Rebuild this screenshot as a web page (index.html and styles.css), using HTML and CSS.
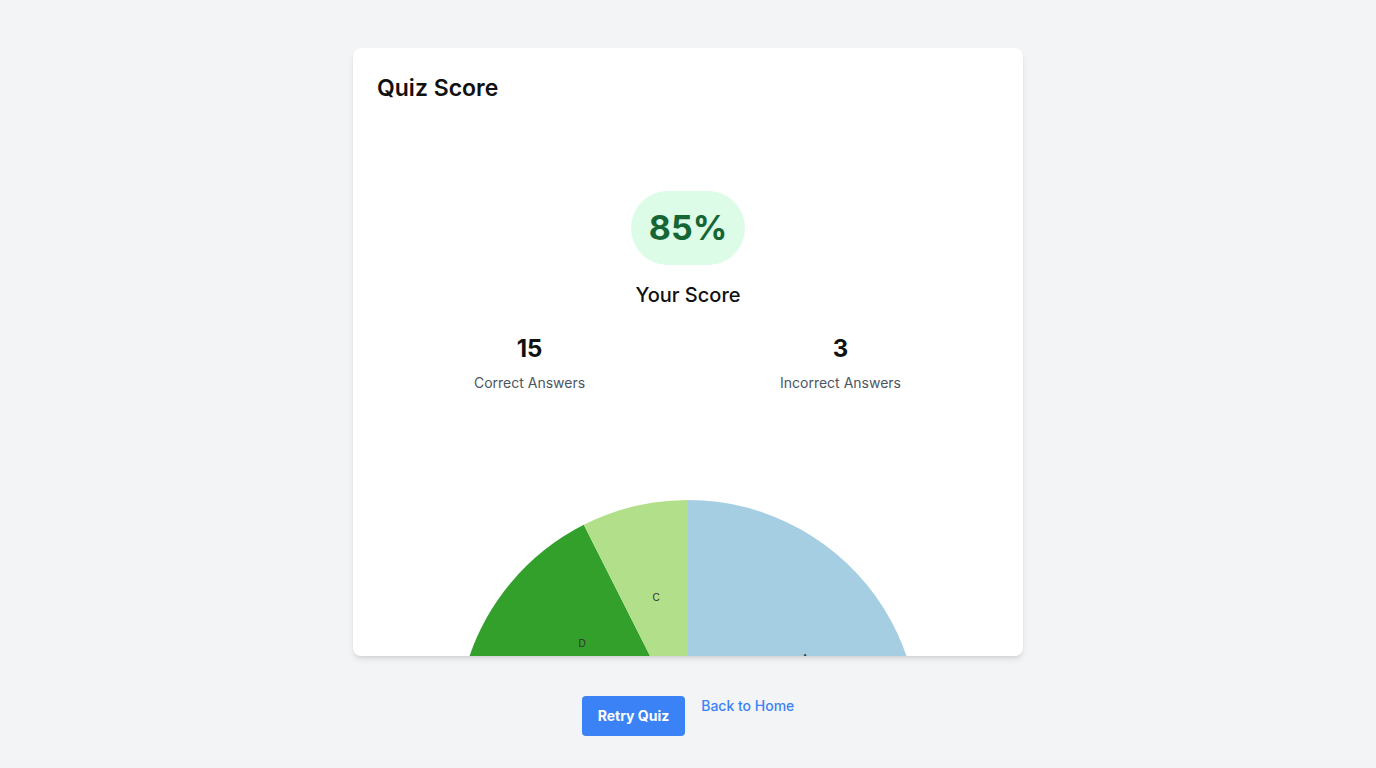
FILE: index.html
```html
<!DOCTYPE html>
<html lang="en">
<head>
<meta charset="utf-8">
<title>Quiz Score</title>
<link rel="stylesheet" href="styles.css">
</head>
<body>
<main class="page">
  <section class="card">
    <h1 class="card-title">Quiz Score</h1>
    <div class="score">
      <div class="score-badge">85%</div>
      <div class="score-label">Your Score</div>
    </div>
    <div class="stats">
      <div class="stat">
        <div class="stat-value">15</div>
        <div class="stat-label">Correct Answers</div>
      </div>
      <div class="stat">
        <div class="stat-value">3</div>
        <div class="stat-label">Incorrect Answers</div>
      </div>
    </div>
    <div class="chart">
      <svg class="pie" width="622" height="622" viewBox="0 0 622 622">
        <path d="M311 311 L311 80 A231 231 0 0 1 518.6 412.3 Z" fill="#a6cee3"/>
        <path d="M311 311 L518.6 412.3 A231 231 0 0 1 89.2 246.6 Z" fill="#1f78b4"/>
        <path d="M311 311 L89.2 246.6 A231 231 0 0 1 206.8 104.8 Z" fill="#33a02c"/>
        <path d="M311 311 L206.8 104.8 A231 231 0 0 1 311 80 Z" fill="#b2df8a"/>
        <text class="pie-label" x="428" y="238" dy="0.35em">A</text>
        <text class="pie-label" x="205" y="223" dy="0.35em">D</text>
        <text class="pie-label" x="279" y="177" dy="0.35em">C</text>
      </svg>
    </div>
  </section>
  <div class="actions">
    <button class="btn-primary" type="button">Retry Quiz</button>
    <a class="link" href="#">Back to Home</a>
  </div>
</main>
</body>
</html>
```

FILE: styles.css
```css
* { box-sizing: border-box; }

body {
  margin: 0;
  background: #f3f4f6;
  font-family: Inter, "Noto Sans", "Liberation Sans", sans-serif;
  color: #111827;
}

.page {
  padding: 48px 0;
}

.card {
  width: 670px;
  height: 608px;
  margin: 0 auto;
  background: #ffffff;
  border-radius: 8px;
  box-shadow: 0 4px 6px -1px rgba(0,0,0,0.1), 0 2px 4px -2px rgba(0,0,0,0.1);
  padding: 24px;
  overflow: hidden;
}

.card-title {
  margin: 0;
  font-size: 23px;
  line-height: 32px;
  font-weight: 600;
  color: #111111;
}

.score {
  margin-top: 87px;
  display: flex;
  flex-direction: column;
  align-items: center;
}

.score-badge {
  background: #dcfce7;
  color: #166534;
  font-size: 34px;
  line-height: 40px;
  font-weight: 700;
  padding: 17px 18px;
  border-radius: 9999px;
}

.score-label {
  margin-top: 16px;
  font-size: 20px;
  line-height: 28px;
  font-weight: 500;
  color: #111111;
}

.stats {
  margin: 24px 3px 0 -3px;
  display: grid;
  grid-template-columns: 1fr 1fr;
}

.stat {
  text-align: center;
}

.stat-value {
  font-size: 24px;
  line-height: 32px;
  font-weight: 700;
  color: #111111;
}

.stat-label {
  margin-top: 8px;
  font-size: 14px;
  line-height: 20px;
  color: #4b5563;
}

.chart {
  margin-top: 27px;
}

.pie {
  display: block;
}

.pie-label {
  font-family: "Liberation Sans", Arial, sans-serif;
  font-size: 10px;
  fill: #333333;
  text-anchor: middle;
}

.actions {
  margin-top: 40px;
  display: flex;
  justify-content: center;
  align-items: flex-start;
  gap: 16px;
}

.btn-primary {
  font-family: inherit;
  font-size: 14px;
  line-height: 20px;
  font-weight: 700;
  color: #ffffff;
  background: #3b82f6;
  border: none;
  border-radius: 4px;
  padding: 10px 16px;
  cursor: pointer;
}

.link {
  font-size: 14px;
  line-height: 20px;
  font-weight: 500;
  color: #3b82f6;
  text-decoration: none;
}
```
